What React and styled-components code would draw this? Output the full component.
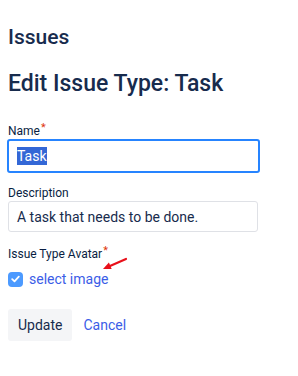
import React from "react";
import styled, { createGlobalStyle } from "styled-components";

const Global = createGlobalStyle`
  html, body { margin: 0; padding: 0; background: #fff; }
  body { font-family: Roboto, "Noto Sans", sans-serif; color: #172B4D; }
  * { box-sizing: border-box; }
`;

const Page = styled.div`
  padding: 8px;
  width: 298px;
`;

const H1 = styled.h1`
  margin: 15px 0 0;
  font-size: 21px;
  font-weight: 500;
  line-height: 28px;
  color: #172B4D;
`;

const H2 = styled.h2`
  margin: 18px 0 0;
  font-size: 23px;
  font-weight: 500;
  line-height: 30px;
  color: #172B4D;
`;

const Form = styled.form`
  margin-top: 26px;
  display: flex;
  flex-direction: column;
`;

const Field = styled.div`
  display: flex;
  flex-direction: column;
  margin-bottom: ${(p) => p.$mb}px;
`;

const Label = styled.label`
  font-size: 12px;
  line-height: 13px;
  font-weight: 400;
  color: #091E42;
  margin-bottom: 1px;
`;

const Req = styled.span`
  color: #DE350B;
  font-size: 11px;
  position: relative;
  top: -4px;
  margin-left: 1px;
`;

const Input = styled.div`
  width: ${(p) => (p.$focused ? 253 : 250)}px;
  height: ${(p) => (p.$focused ? 34 : 31)}px;
  margin-left: ${(p) => (p.$focused ? -1 : 0)}px;
  border: ${(p) => (p.$focused ? "2px solid #2684FF" : "1px solid #DFE1E6")};
  border-radius: 3px;
  display: flex;
  align-items: center;
  padding: 0 8px;
  font-size: 14px;
  color: #172B4D;
  background: #fff;
`;

const Selected = styled.span`
  background: #3367D6;
  color: #fff;
  line-height: 18px;
`;

const AvatarRow = styled.div`
  display: flex;
  align-items: center;
  gap: 6px;
  height: 18px;
  margin-top: 8px;
  position: relative;
`;

const Check = styled.span`
  width: 15px;
  height: 15px;
  border-radius: 4px;
  background: #4C9AFF;
  display: inline-flex;
  align-items: center;
  justify-content: center;
`;

const Link = styled.a`
  color: #3B5DE7;
  font-size: 14px;
  text-decoration: none;
  cursor: pointer;
`;

const Arrow = styled.svg`
  position: absolute;
  left: 92px;
  top: -16px;
`;

const Actions = styled.div`
  display: flex;
  align-items: center;
  gap: 11px;
  margin-top: 21px;
`;

const Button = styled.button`
  height: 32px;
  padding: 0 10px;
  border: none;
  border-radius: 3px;
  background: #F4F5F7;
  font-family: inherit;
  font-size: 14px;
  color: #172B4D;
`;

export default function App() {
  return (
    <Page>
      <Global />
      <H1>Issues</H1>
      <H2>Edit Issue Type: Task</H2>
      <Form onSubmit={(e) => e.preventDefault()}>
        <Field $mb={14}>
          <Label>Name<Req>*</Req></Label>
          <Input $focused><Selected>Task</Selected></Input>
        </Field>
        <Field $mb={16}>
          <Label>Description</Label>
          <Input>A task that needs to be done.</Input>
        </Field>
        <Field $mb={0}>
          <Label>Issue Type Avatar<Req>*</Req></Label>
          <AvatarRow>
            <Check>
              <svg width="9" height="8" viewBox="0 0 9 8">
                <path d="M1.2 4.2 L3.5 6.3 L7.8 1.6" fill="none" stroke="#fff" strokeWidth="1.8" strokeLinecap="round" strokeLinejoin="round" />
              </svg>
            </Check>
            <Link>select image</Link>
            <Arrow width="30" height="18" viewBox="0 0 30 18">
              <path d="M26 5 L10 12" stroke="#E8101A" strokeWidth="2.2" strokeLinecap="round" />
              <path d="M3 15 L8.9 8.6 L11.7 15 Z" fill="#E8101A" />
            </Arrow>
          </AvatarRow>
        </Field>
        <Actions>
          <Button type="button">Update</Button>
          <Link>Cancel</Link>
        </Actions>
      </Form>
    </Page>
  );
}
